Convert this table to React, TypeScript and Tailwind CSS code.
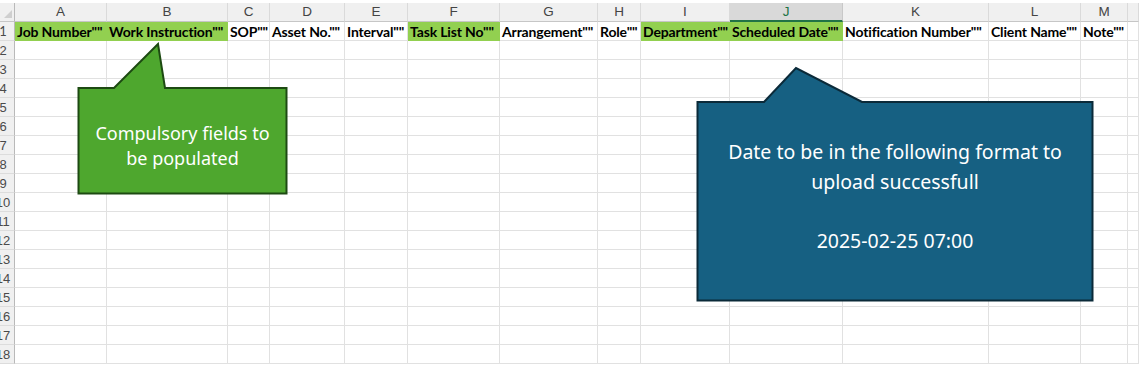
const cols = [
  { key: "A", w: 92, head: 'Job Number""', green: true },
  { key: "B", w: 121, head: 'Work Instruction""', green: true },
  { key: "C", w: 42, head: 'SOP""' },
  { key: "D", w: 75, head: 'Asset No.""' },
  { key: "E", w: 63, head: 'Interval""' },
  { key: "F", w: 92, head: 'Task List No""', green: true },
  { key: "G", w: 98, head: 'Arrangement""' },
  { key: "H", w: 43, head: 'Role""' },
  { key: "I", w: 89, head: 'Department""', green: true },
  { key: "J", w: 113, head: 'Scheduled Date""', green: true, selected: true },
  { key: "K", w: 146, head: 'Notification Number""' },
  { key: "L", w: 92, head: 'Client Name""' },
  { key: "M", w: 47, head: 'Note""' },
  { key: "N", w: 11, head: "", hidden: true },
];

const rows = Array.from({ length: 17 }, (_, i) => i + 2);

function RowHead({ n }: { n: number }) {
  return (
    <div className="w-[15px] shrink-0 h-[19px] overflow-hidden bg-[#f0f0f0] border-r border-r-[#b9b9b9] border-b border-b-[#dcdcdc] flex">
      <div className="-ml-[12px] w-[30px] shrink-0 text-center text-[13px] leading-[19px] text-[#4a4a4a]">
        {n}
      </div>
    </div>
  );
}

export default function App() {
  return (
    <div
      className="relative w-[1139px] h-[365px] overflow-hidden bg-white"
      style={{ fontFamily: '"Liberation Sans", Arial, sans-serif' }}
    >
      <div className="h-[3px] bg-white" />
      {/* column letters */}
      <div className="flex h-[19px]">
        <div className="w-[15px] shrink-0 bg-[#f0f0f0] border-r border-r-[#b9b9b9] border-b border-b-[#c6c6c6] relative">
          <div className="absolute right-[2px] bottom-[3px] w-0 h-0 border-l-[8px] border-l-transparent border-b-[8px] border-b-[#cfcfcf]" />
        </div>
        {cols.map((c) => (
          <div
            key={c.key}
            style={{ width: c.w }}
            className={
              c.selected
                ? "shrink-0 bg-[#d9d9d9] border-r border-r-[#c8c8c8] border-b-2 border-b-[#217346] text-[#217346] text-center text-[13.5px] leading-[18px]"
                : "shrink-0 bg-[#f0f0f0] border-r border-r-[#dadada] border-b border-b-[#c6c6c6] text-[#444444] text-center text-[13.5px] leading-[18px]"
            }
          >
            {c.hidden ? "" : c.key}
          </div>
        ))}
      </div>
      {/* row 1 */}
      <div className="flex h-[19px]" style={{ fontFamily: "Lato, sans-serif" }}>
        <RowHead n={1} />
        {cols.map((c) => (
          <div
            key={c.key}
            style={{ width: c.w }}
            className={
              c.green
                ? "shrink-0 bg-[#92d050] border-b border-b-[#92d050] whitespace-nowrap overflow-hidden pl-[2px] font-bold text-[14px] tracking-[-0.15px] leading-[19px] text-black"
                : "shrink-0 border-r border-r-[#e1e1e1] border-b border-b-[#e1e1e1] whitespace-nowrap overflow-hidden pl-[2px] font-bold text-[14px] tracking-[-0.15px] leading-[19px] text-black"
            }
          >
            {c.head}
          </div>
        ))}
      </div>
      {rows.map((n) => (
        <div key={n} className="flex h-[19px]">
          <RowHead n={n} />
          {cols.map((c) => (
            <div
              key={c.key}
              style={{ width: c.w }}
              className="shrink-0 border-r border-r-[#e1e1e1] border-b border-b-[#e1e1e1]"
            />
          ))}
        </div>
      ))}

      {/* green callout */}
      <div className="absolute left-[76px] top-[42px] w-[213px] h-[154px]">
        <svg width="213" height="154" viewBox="76 42 213 154" className="absolute inset-0">
          <path
            d="M78.5 88 L114 88 L158 44 L165 88 L286.5 88 L286.5 193.5 L78.5 193.5 Z"
            fill="#4ea72e"
            stroke="#1d4a12"
            strokeWidth="2"
          />
        </svg>
        <div
          className="absolute left-0 right-0 top-[79px] text-center text-white text-[18px] leading-[25px]"
          style={{ fontFamily: '"Noto Sans", sans-serif' }}
        >
          Compulsory fields to
          <br />
          be populated
        </div>
      </div>

      {/* blue callout */}
      <div className="absolute left-[695px] top-[66px] w-[400px] h-[237px]">
        <svg width="400" height="237" viewBox="695 66 400 237" className="absolute inset-0">
          <path
            d="M697.5 102 L764 102 L796 68 L862 102 L1092.5 102 L1092.5 300.5 L697.5 300.5 Z"
            fill="#166082"
            stroke="#0b2a39"
            strokeWidth="2"
          />
        </svg>
        <div
          className="absolute left-0 right-0 top-[71px] text-center text-white text-[19.5px] leading-[29.5px]"
          style={{ fontFamily: '"Noto Sans", sans-serif' }}
        >
          Date to be in the following format to
          <br />
          upload successfull
          <br />
          <br />
          2025-02-25 07:00
        </div>
      </div>
    </div>
  );
}
